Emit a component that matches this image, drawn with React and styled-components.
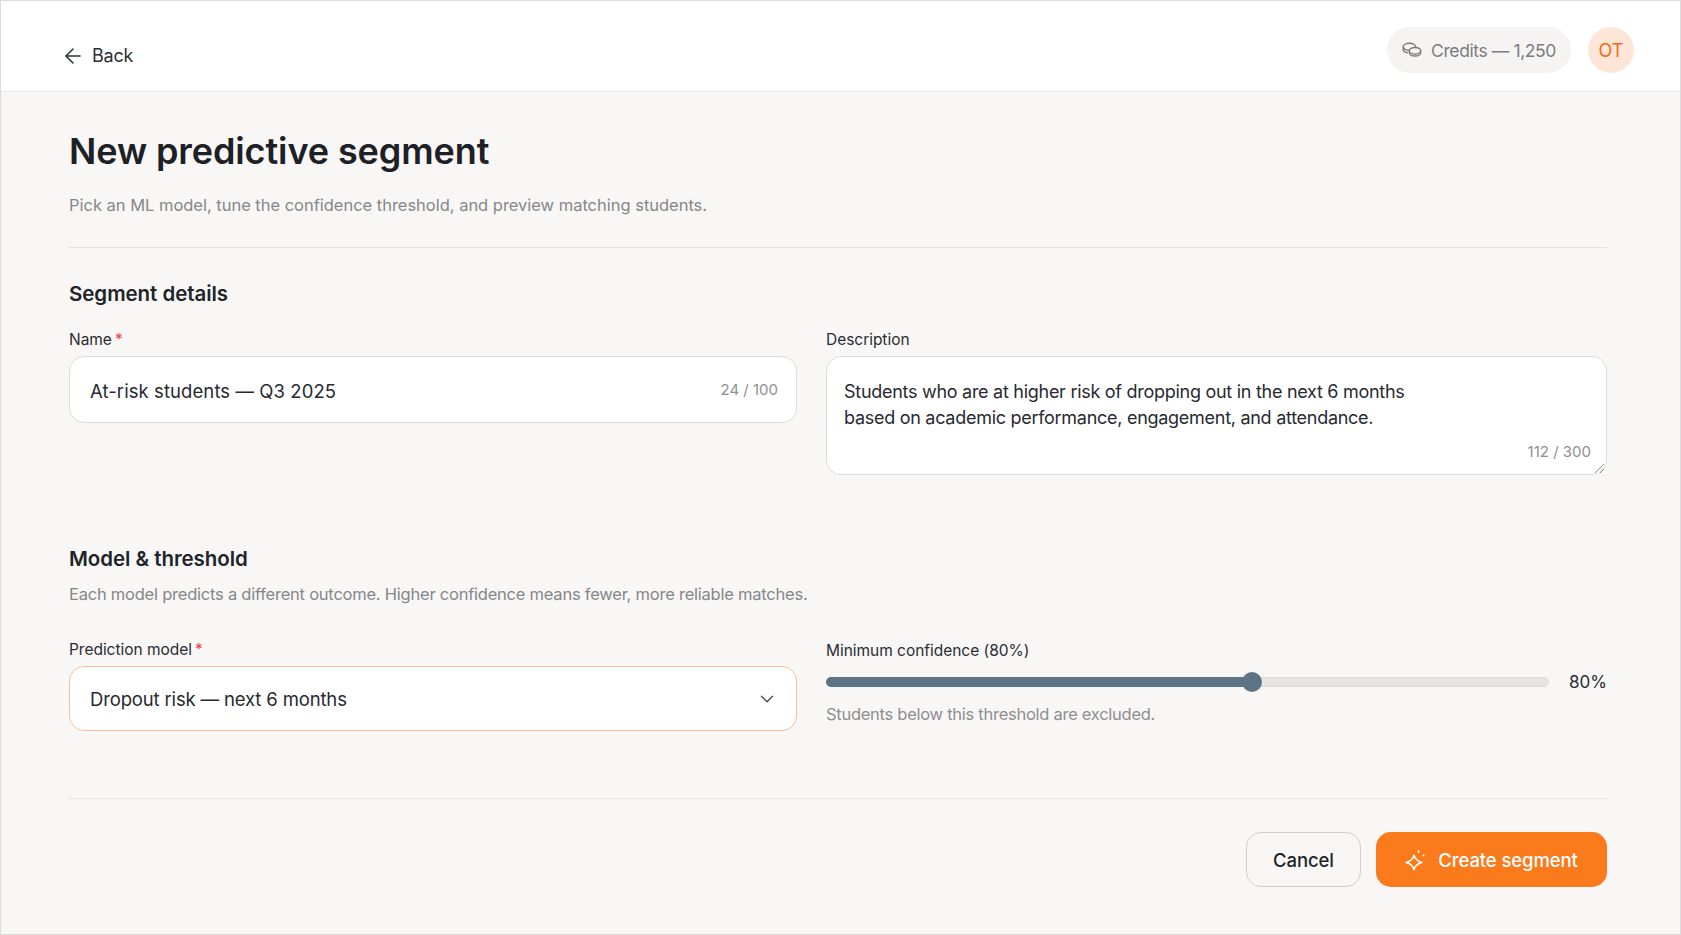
import styled, { createGlobalStyle } from "styled-components";
import { ArrowLeft, ChevronDown } from "lucide-react";

const GlobalStyle = createGlobalStyle`
    html, body {
        margin: 0;
        padding: 0;
        background: #f8f7f5;
    }
    * {
        box-sizing: border-box;
    }
`;

const CoinsIcon = () => (
    <svg width="20" height="16" viewBox="0 0 20 16" fill="none" stroke="currentColor" strokeWidth="1.4">
        <ellipse cx="7.500" cy="4.800" rx="6.300" ry="3.600" />
        <path d="M1.200 4.800v2.600c0 1.600 1.900 2.900 4.600 3.300" />
        <ellipse cx="13" cy="8.800" rx="5.700" ry="3.300" fill="#f5f4f3" />
        <path d="M7.300 8.800v1.900c0 1.800 2.500 3.300 5.700 3.300s5.700-1.500 5.700-3.300V8.800" />
    </svg>
);

const SparkleIcon = () => (
    <svg width="22" height="22" viewBox="0 0 22 22" fill="none" stroke="currentColor" strokeWidth="1.500" strokeLinejoin="round">
        <path d="M9 6.200c.9 4 2.900 6.100 8 7.300-5.100 1.200-7.100 3.300-8 7.300-.9-4-2.900-6.100-8-7.300 5.100-1.200 7.100-3.300 8-7.300z" />
        <path d="M13.500 1.800v1.600" strokeLinecap="round" />
        <circle cx="18.500" cy="6.500" r="1" fill="currentColor" stroke="none" />
    </svg>
);

const GripIcon = () => (
    <svg width="11" height="11" viewBox="0 0 11 11" fill="none" stroke="#8d8d8d" strokeWidth="1">
        <path d="M1 10 10 1M6 10l4-4" />
    </svg>
);

const Frame = styled.div`
    width: 1681px;
    height: 935px;
    display: flex;
    flex-direction: column;
    overflow: hidden;
    background: #f8f7f5;
    border: 1px solid #dcdcdc;
    font-family: Inter, "Liberation Sans", sans-serif;
    color: #20242a;
`;

const TopBar = styled.header`
    height: 91px;
    flex: none;
    display: flex;
    align-items: flex-start;
    justify-content: space-between;
    padding: 26px 46px 0 60px;
    background: #fff;
    border-bottom: 1px solid #e8e7e5;
`;

const BackLink = styled.a`
    display: flex;
    align-items: center;
    gap: 7px;
    margin-top: 16px;
    font-size: 18px;
    letter-spacing: -0.2px;
    line-height: 26px;
    color: #2b2f35;
`;

const TopActions = styled.div`
    display: flex;
    align-items: center;
    gap: 17px;
`;

const CreditsPill = styled.div`
    width: 184px;
    height: 46px;
    display: flex;
    align-items: center;
    justify-content: center;
    gap: 9px;
    border-radius: 23px;
    background: #f5f4f3;
    color: #7b7c7e;
    font-size: 17.500px;
    letter-spacing: -0.4px;
`;

const Avatar = styled.div`
    width: 46px;
    height: 46px;
    display: flex;
    align-items: center;
    justify-content: center;
    border-radius: 50%;
    background: #fde6d8;
    color: #f4690f;
    font-size: 18px;
`;

const Main = styled.main`
    flex: 1;
    padding: 0 73px 0 68px;
`;

const PageHead = styled.div`
    padding: 34px 0 30px;
    border-bottom: 1px solid #e4e3e1;
`;

const Title = styled.h1`
    margin: 0;
    font-size: 36px;
    line-height: 50px;
    font-weight: 600;
    letter-spacing: -0.1px;
    color: #1d2025;
`;

const Subtitle = styled.p`
    margin: 17px 0 0;
    font-size: 16.500px;
    line-height: 24px;
    letter-spacing: -0.02px;
    color: #85878a;
`;

const Section = styled.section`
    padding-top: ${(p) => p.$top}px;
`;

const SectionTitle = styled.h2`
    margin: 0;
    font-size: 20.500px;
    line-height: 28px;
    font-weight: 600;
    letter-spacing: -0.05px;
`;

const SectionHint = styled.p`
    margin: 9px 0 0;
    font-size: 16.500px;
    line-height: 24px;
    letter-spacing: -0.23px;
    color: #85878a;
`;

const Columns = styled.div`
    display: grid;
    grid-template-columns: 728px 781px;
    column-gap: 29px;
    align-items: start;
    margin-top: ${(p) => p.$top}px;
`;

const Field = styled.div`
    display: flex;
    flex-direction: column;
    padding-top: ${(p) => p.$top || 0}px;
`;

const Label = styled.label`
    font-size: 15.500px;
    line-height: 22px;
    letter-spacing: -0.03px;
    margin-bottom: 5px;
    color: #2a2d32;
`;

const Required = styled.span`
    color: #ee3b43;
    margin-left: 3px;
`;

const InputBox = styled.div`
    height: ${(p) => p.$height}px;
    display: flex;
    align-items: center;
    justify-content: space-between;
    padding: 0 18px 0 20px;
    background: #fff;
    border: ${(p) => (p.$focus ? "1.5px solid #fbbd94" : "1px solid #dcdcdc")};
    border-radius: 15px;
    font-size: 18.500px;
    color: #272a30;
`;

const InputText = styled.span`
    letter-spacing: ${(p) => p.$tracking}px;
    padding-top: ${(p) => p.$nudge || 0}px;
`;

const Counter = styled.span`
    font-size: 15px;
    letter-spacing: 0;
    color: #8f9092;
`;

const TextBox = styled.div`
    position: relative;
    height: 119px;
    padding: 22px 17px 0;
    background: #fff;
    border: 1px solid #dcdcdc;
    border-radius: 15px;
    font-size: 18px;
    line-height: 26px;
    letter-spacing: -0.28px;
    color: #272a30;
`;

const TextCounter = styled(Counter)`
    position: absolute;
    right: 15px;
    bottom: 12px;
    line-height: 20px;
`;

const Grip = styled.span`
    position: absolute;
    right: 1px;
    bottom: 0;
    line-height: 0;
`;

const SliderRow = styled.div`
    display: flex;
    align-items: center;
    justify-content: space-between;
    height: 24px;
    margin-top: 3px;
`;

const SliderTrack = styled.div`
    position: relative;
    width: 723px;
    height: 10px;
    border-radius: 5px;
    background: #e6e5e3;
    border: 1px solid #dddcda;
`;

const SliderFill = styled.div`
    height: 10px;
    margin: -1px;
    border-radius: 5px;
    background: #5c7485;
`;

const SliderThumb = styled.div`
    position: absolute;
    top: -6px;
    width: 20px;
    height: 20px;
    margin-left: -10px;
    border-radius: 50%;
    background: #5c7485;
`;

const SliderValue = styled.span`
    font-size: 17px;
    letter-spacing: 0;
    color: #2a2d32;
`;

const FieldHint = styled.p`
    margin: 8px 0 0;
    font-size: 16.500px;
    line-height: 24px;
    letter-spacing: -0.27px;
    color: #8d8f91;
`;

const Footer = styled.div`
    display: flex;
    justify-content: flex-end;
    gap: 15px;
    margin-top: 67px;
    padding-top: 33px;
    border-top: 1px solid #e4e3e1;
`;

const Button = styled.button`
    height: 55px;
    display: flex;
    align-items: center;
    justify-content: center;
    gap: 11px;
    border-radius: 15px;
    font-family: inherit;
    font-size: 18.500px;
    font-weight: 500;
    letter-spacing: -0.1px;
`;

const CancelButton = styled(Button)`
    width: 115px;
    background: transparent;
    border: 1px solid #cfcfcf;
    color: #22262b;
`;

const CreateButton = styled(Button)`
    width: 231px;
    background: #fb7a1c;
    border: none;
    color: #fff;
`;

export default function App() {
    const confidence = 80;
    return (
        <Frame>
            <GlobalStyle />
            <TopBar>
                <BackLink>
                    <ArrowLeft size={24} strokeWidth={1.5} />
                    Back
                </BackLink>
                <TopActions>
                    <CreditsPill>
                        <CoinsIcon />
                        Credits — 1,250
                    </CreditsPill>
                    <Avatar>OT</Avatar>
                </TopActions>
            </TopBar>
            <Main>
                <PageHead>
                    <Title>New predictive segment</Title>
                    <Subtitle>Pick an ML model, tune the confidence threshold, and preview matching students.</Subtitle>
                </PageHead>
                <Section $top={32}>
                    <SectionTitle>Segment details</SectionTitle>
                    <Columns $top={21}>
                        <Field>
                            <Label>Name<Required>*</Required></Label>
                            <InputBox $height={67}>
                                <InputText $tracking={0.08} $nudge={3}>At-risk students — Q3 2025</InputText>
                                <Counter>24 / 100</Counter>
                            </InputBox>
                        </Field>
                        <Field>
                            <Label>Description</Label>
                            <TextBox>
                                Students who are at higher risk of dropping out in the next 6 months<br />
                                based on academic performance, engagement, and attendance.
                                <TextCounter>112 / 300</TextCounter>
                                <Grip><GripIcon /></Grip>
                            </TextBox>
                        </Field>
                    </Columns>
                </Section>
                <Section $top={70}>
                    <SectionTitle>Model &amp; threshold</SectionTitle>
                    <SectionHint>Each model predicts a different outcome. Higher confidence means fewer, more reliable matches.</SectionHint>
                    <Columns $top={33}>
                        <Field>
                            <Label>Prediction model<Required>*</Required></Label>
                            <InputBox $height={65} $focus>
                                <InputText $tracking={-0.15}>Dropout risk — next 6 months</InputText>
                                <ChevronDown size={22} strokeWidth={1.5} color="#4b4f55" />
                            </InputBox>
                        </Field>
                        <Field $top={1}>
                            <Label>Minimum confidence ({confidence}%)</Label>
                            <SliderRow>
                                <SliderTrack>
                                    <SliderFill style={{ width: `${(426 / 723) * 100}%` }} />
                                    <SliderThumb style={{ left: `${(426 / 723) * 100}%` }} />
                                </SliderTrack>
                                <SliderValue>{confidence}%</SliderValue>
                            </SliderRow>
                            <FieldHint>Students below this threshold are excluded.</FieldHint>
                        </Field>
                    </Columns>
                </Section>
                <Footer>
                    <CancelButton>Cancel</CancelButton>
                    <CreateButton>
                        <SparkleIcon />
                        Create segment
                    </CreateButton>
                </Footer>
            </Main>
        </Frame>
    );
}
